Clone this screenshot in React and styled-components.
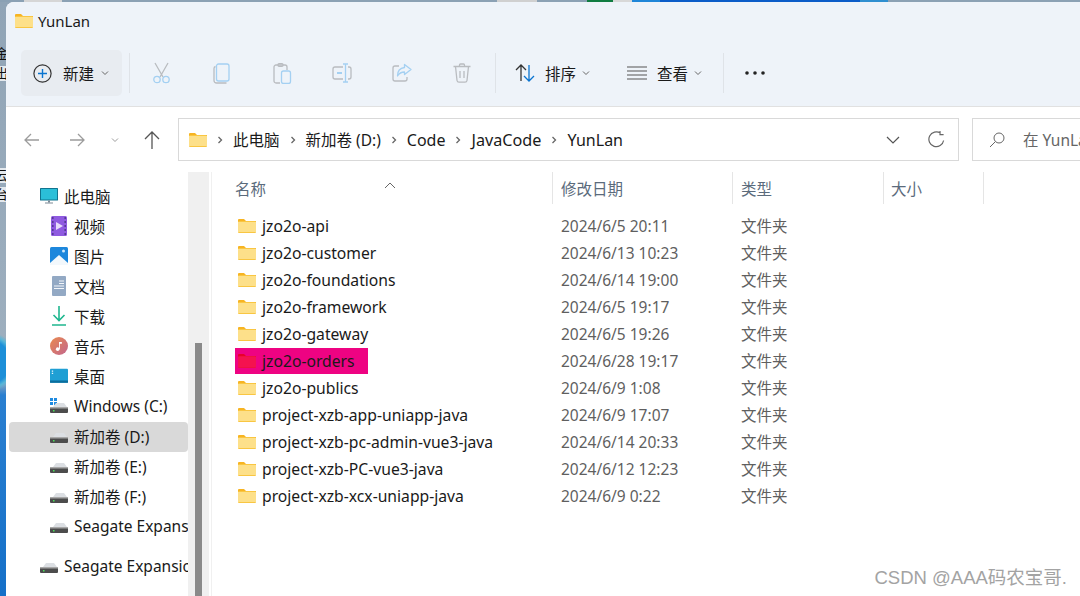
import styled, { createGlobalStyle } from "styled-components";

const folders = [
  ["jzo2o-api", "2024/6/5 20:11"],
  ["jzo2o-customer", "2024/6/13 10:23"],
  ["jzo2o-foundations", "2024/6/14 19:00"],
  ["jzo2o-framework", "2024/6/5 19:17"],
  ["jzo2o-gateway", "2024/6/5 19:26"],
  ["jzo2o-orders", "2024/6/28 19:17", true],
  ["jzo2o-publics", "2024/6/9 1:08"],
  ["project-xzb-app-uniapp-java", "2024/6/9 17:07"],
  ["project-xzb-pc-admin-vue3-java", "2024/6/14 20:33"],
  ["project-xzb-PC-vue3-java", "2024/6/12 12:23"],
  ["project-xzb-xcx-uniapp-java", "2024/6/9 0:22"],
];

const crumbs = [
  ["此电脑", 15.5],
  ["新加卷 (D:)", 15.5],
  ["Code", 16],
  ["JavaCode", 16.2],
  ["YunLan", 16],
];

const GlobalStyle = createGlobalStyle`
  html, body {
    margin: 0;
    padding: 0;
    background: #fff;
  }
  * {
    box-sizing: border-box;
  }
`;

const FONT = `"Noto Sans", "Noto Sans CJK SC", sans-serif`;

const Page = styled.div`
  position: relative;
  display: flex;
  width: 1080px;
  height: 596px;
  overflow: hidden;
  padding: 2px 0 0 6px;
  font-family: ${FONT};
  font-size: 15.5px;
  color: #1a1a1a;
  background:
    linear-gradient(90deg,
      #8ba1b4 0 24px, #d6d6d6 24px 62px, #8ba1b4 62px 497px, #d0d0d0 497px 537px,
      #8ba1b4 537px 587px, #107c41 587px 613px, #d8d8d8 613px 632px,
      #1f86d8 632px 660px, #0b5cc8 660px 860px, #2f8fd0 860px 888px, #8ba1b4 888px) top / 100% 2px no-repeat,
    radial-gradient(circle at -12px 362px, #1d8fd8 0 22px, #58b6d8 26px, transparent 30px),
    linear-gradient(180deg, #90a4b6 0, #9fb0bf 380px, #2a7fd0 395px, #1570c8 100%);
`;

const DesktopLabel = styled.span`
  position: absolute;
  left: -6px;
  top: ${(p) => p.$top}px;
  padding: 0 1px;
  background: ${(p) => (p.$plate ? "#e4e9ee" : "transparent")};
  font-size: 13px;
  line-height: 15px;
  color: #111;
`;

const Window = styled.div`
  position: relative;
  z-index: 1;
  display: flex;
  flex-direction: column;
  width: 1074px;
  height: 594px;
  background: #fff;
  border-top-left-radius: 8px;
  overflow: hidden;
`;

const Header = styled.header`
  flex: none;
  height: 105px;
  background: #eef3f9;
  border-bottom: 1px solid #e1e1e1;
`;

const TitleRow = styled.div`
  display: flex;
  align-items: center;
  gap: 5px;
  height: 38px;
  padding-left: 9px;
  font-size: 15px;
`;

const Toolbar = styled.div`
  display: flex;
  align-items: center;
  height: 66px;
  padding-left: 15px;
`;

const NewButton = styled.div`
  display: flex;
  align-items: center;
  width: 101px;
  height: 46px;
  padding-left: 12px;
  background: #e8ecf1;
  border-radius: 5px;
`;

const ButtonLabel = styled.span`
  display: flex;
  margin-left: ${(p) => p.$gap || 10}px;
`;

const Divider = styled.i`
  display: block;
  width: 1px;
  height: 40px;
  margin: 0 ${(p) => p.$right || 0}px 0 ${(p) => p.$left || 0}px;
  background: #dfe3e8;
`;

const ToolIcon = styled.span`
  display: flex;
  align-items: center;
  justify-content: center;
  width: 60px;
`;

const NavRow = styled.div`
  flex: none;
  display: flex;
  align-items: center;
  height: 65px;
  padding-left: 4px;
`;

const NavIcon = styled.span`
  flex: none;
  display: flex;
  justify-content: center;
  width: ${(p) => p.$w}px;
`;

const AddressBox = styled.div`
  display: flex;
  align-items: center;
  flex: none;
  width: 781px;
  height: 43px;
  margin-left: 4px;
  padding: 0 13px 0 10px;
  border: 1px solid #d9d9d9;
  background: #fff;
`;

const Crumb = styled.span`
  display: flex;
  align-items: center;
  font-size: ${(p) => p.$size}px;
  white-space: nowrap;
`;

const CrumbArrow = styled.svg`
  margin: 0 9px;
`;

const AddressTools = styled.div`
  display: flex;
  align-items: center;
  gap: 28px;
  margin-left: auto;
`;

const SearchBox = styled.div`
  flex: none;
  display: flex;
  align-items: center;
  gap: 18px;
  width: 130px;
  height: 43px;
  margin-left: 13px;
  padding-left: 16px;
  border: 1px solid #d9d9d9;
  border-right: none;
  color: #666;
  white-space: nowrap;
`;

const Body = styled.div`
  flex: 1;
  display: flex;
  min-height: 0;
`;

const Sidebar = styled.nav`
  flex: none;
  width: 182px;
  padding: 10px 0 0 3px;
`;

const NavItem = styled.div`
  display: flex;
  align-items: center;
  height: 30px;
  padding: 0 0 2px ${(p) => p.$indent}px;
  margin-bottom: ${(p) => p.$after || 0}px;
  background: ${(p) => (p.$active ? "#d9d9d9" : "transparent")};
  border-radius: 4px;
  white-space: nowrap;
  overflow: hidden;
`;

const NavIconBox = styled.span`
  flex: none;
  display: flex;
  justify-content: center;
  width: 18px;
  margin-right: 6px;
`;

const ScrollTrack = styled.div`
  flex: none;
  display: flex;
  width: 21px;
  padding: 171px 7px 0;
  background: #f0f0f0;
`;

const ScrollThumb = styled.div`
  flex: 1;
  background: #8a8a8a;
`;

const ListPane = styled.section`
  position: relative;
  flex: 1;
  margin-left: 2px;
  padding-left: 23px;
  border-left: 1px solid #f0f0f0;
`;

const SortMark = styled.span`
  position: absolute;
  left: 172px;
  top: 0;
`;

const columns = "318px 180px 151px 100px";

const ColumnHead = styled.div`
  display: grid;
  grid-template-columns: ${columns};
  height: 32px;
  margin-bottom: 8px;
`;

const HeadCell = styled.div`
  display: flex;
  align-items: center;
  padding-left: ${(p) => p.$pad ?? 8}px;
  border-right: 1px solid #e5e5e5;
  color: #5b6b7c;
`;

const Row = styled.div`
  display: grid;
  grid-template-columns: ${columns};
  align-items: center;
  height: 27px;
  color: #5f5f5f;
`;

const NameCell = styled.div`
  display: flex;
  align-items: center;
  gap: 6px;
  justify-self: start;
  height: 26px;
  padding: 0 13px 0 3px;
  font-size: 15.7px;
  color: #1a1a1a;
  background: ${(p) => (p.$marked ? "#ee0382" : "transparent")};
  white-space: nowrap;
`;

const TextCell = styled.div`
  padding-left: 8px;
`;

const Watermark = styled.div`
  position: absolute;
  right: 13px;
  bottom: 7px;
  z-index: 2;
  font-family: "Liberation Sans", "Noto Sans CJK SC", sans-serif;
  font-size: 18.5px;
  color: #a3a3a3;
`;

const Folder = ({ size = 18, marked }) => (
  <svg width={size} height={(size * 14) / 18} viewBox="0 0 18 14">
    <path d="M0 1a1 1 0 0 1 1-1h5l2 2h10v3H0z" fill={marked ? "#e8002a" : "#f7b422"} />
    <rect y="2" width="18" height="12" rx="1" fill={marked ? "#f0113f" : "#f9c642"} />
    <rect y="3" width="18" height="10" fill={marked ? "#f4124f" : "#fde08a"} />
  </svg>
);

const Chevron = ({ size = 8, color = "#666" }) => (
  <svg width={size} height={size} viewBox="0 0 8 8" fill="none" stroke={color} strokeWidth="1">
    <path d="M1 2.5l3 3 3-3" />
  </svg>
);

const GRAY = "#b9bcc0";
const BLUE = "#a4d0f2";

const CutIcon = () => (
  <svg width="20" height="22" viewBox="0 0 20 22" fill="none" strokeWidth="1.3">
    <path d="M3 1l8 14M16 1L8 15" stroke={GRAY} />
    <circle cx="5" cy="17.5" r="3.2" stroke={BLUE} />
    <circle cx="14" cy="17.5" r="3.2" stroke={BLUE} />
  </svg>
);
const CopyIcon = () => (
  <svg width="18" height="21" viewBox="0 0 18 21" fill="none" strokeWidth="1.3">
    <path d="M2.5 3.5A2 2 0 0 0 1 5.5v12A2.5 2.5 0 0 0 3.5 20h10" stroke={GRAY} />
    <rect x="3.5" y="1" width="12.5" height="17" rx="2" stroke={BLUE} />
  </svg>
);
const PasteIcon = () => (
  <svg width="19" height="21" viewBox="0 0 19 21" fill="none" strokeWidth="1.3">
    <path d="M7 20H3a2 2 0 0 1-2-2V4a2 2 0 0 1 2-2h9a2 2 0 0 1 2 2v3" stroke={GRAY} />
    <rect x="5" y="0.7" width="5" height="2.6" rx="1" stroke={GRAY} />
    <rect x="8.5" y="8" width="9" height="12.5" rx="2" stroke={BLUE} />
  </svg>
);
const RenameIcon = () => (
  <svg width="20" height="20" viewBox="0 0 20 20" fill="none" strokeWidth="1.3">
    <path d="M11 4H3a2 2 0 0 0-2 2v8a2 2 0 0 0 2 2h8M16 4h1a2 2 0 0 1 2 2v8a2 2 0 0 1-2 2h-1" stroke={GRAY} />
    <path d="M11 1h5M11 19h5M13.5 1v18" stroke={BLUE} />
    <path d="M5 10h5" stroke={BLUE} strokeWidth="2.2" />
  </svg>
);
const ShareIcon = () => (
  <svg width="20" height="20" viewBox="0 0 20 20" fill="none" strokeWidth="1.3">
    <path d="M7 3H3a2 2 0 0 0-2 2v11a2 2 0 0 0 2 2h10a2 2 0 0 0 2-2v-2" stroke={GRAY} />
    <path d="M12.5 1.5L19 6.5l-6.5 5V9C9 9 7 10.5 5.5 13 5.5 8.5 8 5 12.5 4.5z" stroke={BLUE} strokeLinejoin="round" />
  </svg>
);
const TrashIcon = () => (
  <svg width="18" height="20" viewBox="0 0 18 20" fill="none" stroke={GRAY} strokeWidth="1.3">
    <path d="M0.5 3.5h17M6.5 3.5V2a1 1 0 0 1 1-1h3a1 1 0 0 1 1 1v1.5M2.5 3.5L4 17.5a2 2 0 0 0 2 1.7h6a2 2 0 0 0 2-1.7l1.5-14M7 8v7M11 8v7" />
  </svg>
);

const MonitorIcon = () => (
  <svg width="18" height="16" viewBox="0 0 18 16">
    <rect width="18" height="12.5" rx="0.5" fill="#11748f" />
    <rect x="1" y="1" width="16" height="10.5" fill="#2bbfd8" />
    <rect x="8" y="12.5" width="2" height="2" fill="#7c8a96" />
    <rect x="5" y="14.5" width="8" height="1" fill="#7c8a96" />
  </svg>
);
const VideoIcon = () => (
  <svg width="16" height="20" viewBox="0 0 16 20">
    <rect width="16" height="20" rx="1.5" fill="#8f5be0" />
    <path d="M1 2h1.6M1 6h1.6M1 10h1.6M1 14h1.6M1 18h1.6M13.4 2H15M13.4 6H15M13.4 10H15M13.4 14H15M13.4 18H15" stroke="#43307c" strokeWidth="1.6" />
    <path d="M5 6l7 4-7 4z" fill="#e7dcfb" />
  </svg>
);
const PictureIcon = () => (
  <svg width="18" height="18" viewBox="0 0 18 18">
    <rect width="18" height="18" rx="1.5" fill="#1d87dc" />
    <circle cx="13.5" cy="4" r="1.5" fill="#cfe8fb" />
    <path d="M0 16l9-8 9 8v2H0z" fill="#f3f8fc" />
  </svg>
);
const DocIcon = () => (
  <svg width="14" height="20" viewBox="0 0 14 20">
    <rect width="14" height="20" rx="1" fill="#93a9c4" />
    <path d="M7 5h5M7 7.5h5M2 10h10M2 12.5h10" stroke="#f3f6fa" strokeWidth="1" />
  </svg>
);
const DownloadIcon = () => (
  <svg width="14" height="20" viewBox="0 0 14 20" fill="none" stroke="#1fb78f" strokeWidth="1.6">
    <path d="M7 0v14M1.5 9L7 14.5 12.5 9M0 19h14" />
  </svg>
);
const MusicIcon = () => (
  <svg width="20" height="20" viewBox="0 0 20 20">
    <defs>
      <linearGradient id="mus" x1="0" y1="0" x2="1" y2="1">
        <stop offset="0" stopColor="#ea8a4e" />
        <stop offset="1" stopColor="#c2668e" />
      </linearGradient>
    </defs>
    <circle cx="10" cy="10" r="10" fill="url(#mus)" />
    <circle cx="8.5" cy="13.5" r="2" fill="#fff" />
    <path d="M10 13.5V5.5h3.2V7.5H11v6z" fill="#fff" />
  </svg>
);
const DesktopIcon = () => (
  <svg width="20" height="16" viewBox="0 0 20 16">
    <rect width="20" height="15.5" rx="1" fill="#1f9fd4" />
    <rect y="13" width="20" height="2.5" fill="#0b6d9c" />
    <path d="M2 2.5h1.5M2 5h1.5" stroke="#e6f6fc" strokeWidth="1.4" />
  </svg>
);
const DriveIcon = ({ win }) => (
  <svg width="18" height="16" viewBox="0 0 18 16">
    {win && (
      <path d="M0 0h3v3H0zM4 0h3v3H4zM0 4h3v3H0zM4 4h3v3H4z" fill="#1f8ae0" />
    )}
    <path d="M3 9l3-4h8l3 4z" fill="#dcdfe3" />
    <rect y="9" width="18" height="6" rx="1" fill="#4c4c4c" />
    <rect y="9" width="18" height="1.5" fill="#a8a8a8" />
    <rect x="3" y="12" width="1.5" height="1.5" fill="#4be05a" />
  </svg>
);

const App = () => (
  <>
    <GlobalStyle />
    <Page>
      <DesktopLabel $top={46}>金</DesktopLabel>
      <DesktopLabel $top={66} $plate>出</DesktopLabel>
      <DesktopLabel $top={168} $plate>云</DesktopLabel>
      <DesktopLabel $top={187} $plate>台</DesktopLabel>
      <Window>
        <Header>
          <TitleRow>
            <Folder />
            YunLan
          </TitleRow>
          <Toolbar>
            <NewButton>
              <svg width="19" height="19" viewBox="0 0 19 19" fill="none">
                <circle cx="9.5" cy="9.5" r="8.6" stroke="#333" strokeWidth="1.2" />
                <path d="M9.5 5v9M5 9.5h9" stroke="#0a74d0" strokeWidth="1.4" />
              </svg>
              <ButtonLabel $gap={11}>新建</ButtonLabel>
              <ButtonLabel $gap={7}><Chevron /></ButtonLabel>
            </NewButton>
            <Divider $left={7} $right={2} />
            <ToolIcon><CutIcon /></ToolIcon>
            <ToolIcon><CopyIcon /></ToolIcon>
            <ToolIcon><PasteIcon /></ToolIcon>
            <ToolIcon><RenameIcon /></ToolIcon>
            <ToolIcon><ShareIcon /></ToolIcon>
            <ToolIcon><TrashIcon /></ToolIcon>
            <Divider $left={3} $right={19} />
            <svg width="20" height="18" viewBox="0 0 20 18" fill="none" strokeWidth="1.3">
              <path d="M6 17V1M1 6l5-5 5 5" stroke="#333" />
              <path d="M14 1v16M9 12l5 5 5-5" stroke="#0a74d0" />
            </svg>
            <ButtonLabel $gap={10}>排序</ButtonLabel>
            <ButtonLabel $gap={6}><Chevron /></ButtonLabel>
            <ButtonLabel $gap={37}>
              <svg width="20" height="14" viewBox="0 0 20 14" fill="none" stroke="#555" strokeWidth="1.2">
                <path d="M0 1h20M0 5h20M0 9h20M0 13h20" />
              </svg>
            </ButtonLabel>
            <ButtonLabel $gap={10}>查看</ButtonLabel>
            <ButtonLabel $gap={6}><Chevron /></ButtonLabel>
            <Divider $left={21} $right={21} />
            <svg width="20" height="4" viewBox="0 0 20 4" fill="#222">
              <circle cx="2" cy="2" r="1.8" />
              <circle cx="10" cy="2" r="1.8" />
              <circle cx="18" cy="2" r="1.8" />
            </svg>
          </Toolbar>
        </Header>

        <NavRow>
          <NavIcon $w={44}>
            <svg width="16" height="14" viewBox="0 0 16 14" fill="none" stroke="#9c9c9c" strokeWidth="1.3">
              <path d="M15 7H1M7 1L1 7l6 6" />
            </svg>
          </NavIcon>
          <NavIcon $w={46}>
            <svg width="16" height="14" viewBox="0 0 16 14" fill="none" stroke="#9c9c9c" strokeWidth="1.3">
              <path d="M1 7h14M9 1l6 6-6 6" />
            </svg>
          </NavIcon>
          <NavIcon $w={30}><Chevron color="#9c9c9c" /></NavIcon>
          <NavIcon $w={44}>
            <svg width="16" height="18" viewBox="0 0 16 18" fill="none" stroke="#555" strokeWidth="1.3">
              <path d="M8 18V1M1 8l7-7 7 7" />
            </svg>
          </NavIcon>
          <AddressBox>
            <Folder />
            {crumbs.map(([crumb, size]) => (
              <Crumb key={crumb} $size={size}>
                <CrumbArrow width="8" height="10" viewBox="0 0 8 10" fill="none" stroke="#666" strokeWidth="1.3">
                  <path d="M2.5 2l3 3-3 3" />
                </CrumbArrow>
                {crumb}
              </Crumb>
            ))}
            <AddressTools>
              <svg width="14" height="8" viewBox="0 0 14 8" fill="none" stroke="#555" strokeWidth="1.2">
                <path d="M1 1l6 6 6-6" />
              </svg>
              <svg width="17" height="17" viewBox="0 0 17 17" fill="none" stroke="#666" strokeWidth="1.2">
                <path d="M15.6 9.5A7.4 7.4 0 1 1 12.5 2.2M12 0v3.6h3.6" />
              </svg>
            </AddressTools>
          </AddressBox>
          <SearchBox>
            <svg width="16" height="16" viewBox="0 0 16 16" fill="none" stroke="#666" strokeWidth="1">
              <circle cx="10" cy="6" r="5" />
              <path d="M6.3 9.7L1 15" />
            </svg>
            在 YunLan
          </SearchBox>
        </NavRow>

        <Body>
          <Sidebar>
            <NavItem $indent={31}><NavIconBox><MonitorIcon /></NavIconBox>此电脑</NavItem>
            <NavItem $indent={41}><NavIconBox><VideoIcon /></NavIconBox>视频</NavItem>
            <NavItem $indent={41}><NavIconBox><PictureIcon /></NavIconBox>图片</NavItem>
            <NavItem $indent={41}><NavIconBox><DocIcon /></NavIconBox>文档</NavItem>
            <NavItem $indent={41}><NavIconBox><DownloadIcon /></NavIconBox>下载</NavItem>
            <NavItem $indent={41}><NavIconBox><MusicIcon /></NavIconBox>音乐</NavItem>
            <NavItem $indent={41}><NavIconBox><DesktopIcon /></NavIconBox>桌面</NavItem>
            <NavItem $indent={41}><NavIconBox><DriveIcon win /></NavIconBox>Windows (C:)</NavItem>
            <NavItem $indent={41} $active><NavIconBox><DriveIcon /></NavIconBox>新加卷 (D:)</NavItem>
            <NavItem $indent={41}><NavIconBox><DriveIcon /></NavIconBox>新加卷 (E:)</NavItem>
            <NavItem $indent={41}><NavIconBox><DriveIcon /></NavIconBox>新加卷 (F:)</NavItem>
            <NavItem $indent={41} $after={10}><NavIconBox><DriveIcon /></NavIconBox>Seagate Expansion Drive</NavItem>
            <NavItem $indent={31}><NavIconBox><DriveIcon /></NavIconBox>Seagate Expansion Drive</NavItem>
          </Sidebar>
          <ScrollTrack>
            <ScrollThumb />
          </ScrollTrack>
          <ListPane>
            <SortMark>
              <svg width="12" height="7" viewBox="0 0 12 7" fill="none" stroke="#666" strokeWidth="1">
                <path d="M1 6l5-5 5 5" />
              </svg>
            </SortMark>
            <ColumnHead>
              <HeadCell $pad={0}>名称</HeadCell>
              <HeadCell>修改日期</HeadCell>
              <HeadCell>类型</HeadCell>
              <HeadCell $pad={7}>大小</HeadCell>
            </ColumnHead>
            {folders.map(([name, date, marked]) => (
              <Row key={name}>
                <NameCell $marked={marked}>
                  <Folder marked={marked} />
                  {name}
                </NameCell>
                <TextCell>{date}</TextCell>
                <TextCell>文件夹</TextCell>
              </Row>
            ))}
          </ListPane>
        </Body>
      </Window>
      <Watermark>CSDN @AAA码农宝哥.</Watermark>
    </Page>
  </>
);

export default App;
